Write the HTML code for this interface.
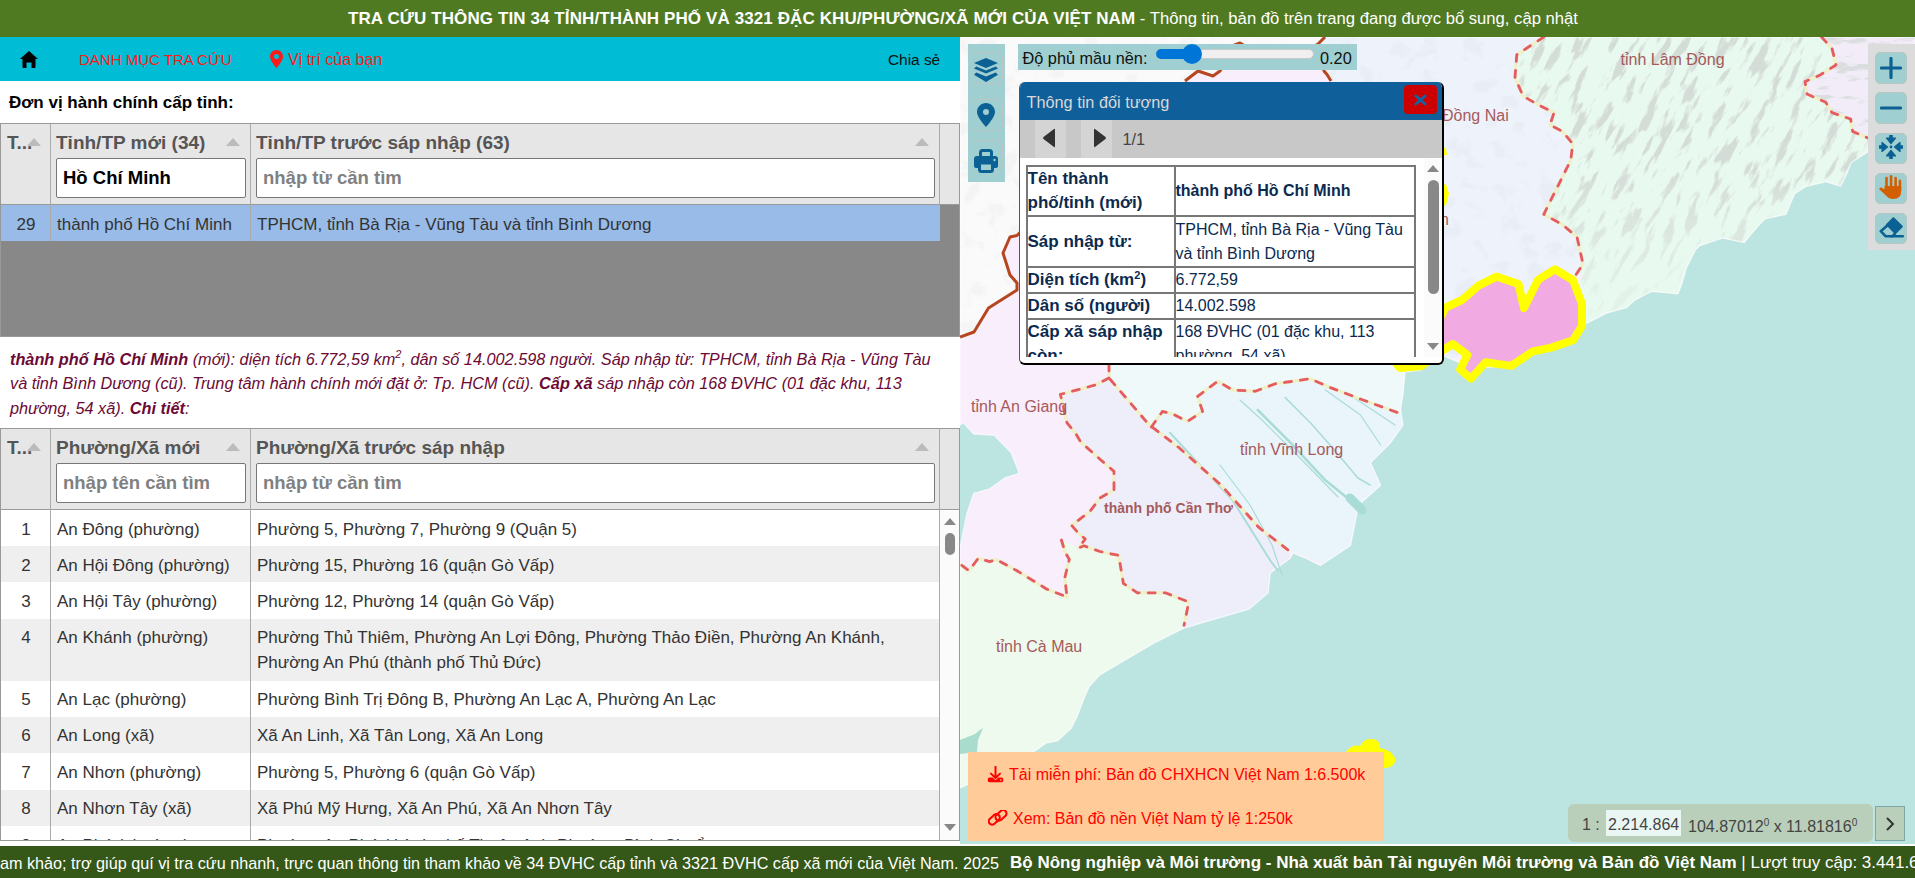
<!DOCTYPE html>
<html><head><meta charset="utf-8">
<style>
*{box-sizing:border-box;margin:0;padding:0}
html,body{width:1915px;height:878px;overflow:hidden;background:#fff;font-family:"Liberation Sans",sans-serif;color:#333}
.abs{position:absolute}
.nw{white-space:nowrap}
#top{left:0;top:0;width:1915px;height:37px;background:#4f7a21;color:#fff;font-size:17px;line-height:37px}
#nav{left:0;top:37px;width:960px;height:44px;background:#00bcd4}
#foot{left:0;top:846px;width:1915px;height:32px;background:#355717;color:#fff;font-size:16.2px;line-height:34px}
.grid{left:0;width:960px;border:1px solid #999;background:#fff;overflow:hidden}
.hdr{left:0;top:0;width:958px;height:81px;background:#e6e6e6;border-bottom:1px solid #999}
.vl{width:1px;background:#aaa}
.htxt{font-size:19px;font-weight:bold;color:#555;top:8px}
.sort{width:0;height:0;border-left:7px solid transparent;border-right:7px solid transparent;border-bottom:8px solid #bbb}
.inp{height:40px;background:#fff;border:1px solid #777;border-radius:2px;font-size:18.5px;font-weight:bold;line-height:38px;padding-left:6px;color:#808080}
.row{left:0;width:939px;font-size:17px;color:#333;line-height:26px}
.c1{left:0;width:50px;text-align:center}
.c2{left:56px}
.c3{left:256px}
.desc{left:10px;top:347px;font-size:16.3px;font-style:italic;color:#6b0a35;line-height:24.3px}
.desc b{font-weight:bold}
.tb{width:32px;height:32px;background:#9fcfd0;border:1px solid #b9c6c6;border-radius:5px}
.pt{border-collapse:collapse;font-size:16px;color:#0b2a4e;line-height:24px}
.pt th,.pt td{border:2px solid #777;text-align:left;vertical-align:middle;padding:0;white-space:nowrap}
.pt th{width:148px;font-weight:bold;font-size:17px}
.pt td{width:240px}
</style></head><body>
<div id="top" class="abs nw"><span class="abs" style="left:348px"><b style="letter-spacing:0.1px">TRA CỨU THÔNG TIN 34 TỈNH/THÀNH PHỐ VÀ 3321 ĐẶC KHU/PHƯỜNG/XÃ MỚI CỦA VIỆT NAM</b><span style="font-size:16.65px"> - Thông tin, bản đồ trên trang đang được bổ sung, cập nhật</span></span></div>

<div id="nav" class="abs">
  <svg class="abs" style="left:20px;top:14px" width="18" height="17" viewBox="0 0 18 17"><path d="M9 0 L18 8 L15.5 8 L15.5 16 Q15.5 17 14.5 17 L11.5 17 L11.5 11.5 L6.5 11.5 L6.5 17 L3.5 17 Q2.5 17 2.5 16 L2.5 8 L0 8 Z" fill="#000"/></svg>
  <span class="abs nw" style="left:79px;top:14px;font-size:15px;color:#ff1a1a">DANH MỤC TRA CỨU</span>
  <svg class="abs" style="left:270px;top:13px" width="13" height="18" viewBox="0 0 13 18"><path d="M6.5 0C2.9 0 0 2.9 0 6.5 0 11 6.5 18 6.5 18S13 11 13 6.5C13 2.9 10.1 0 6.5 0Zm0 9A2.5 2.5 0 1 1 6.5 4 2.5 2.5 0 0 1 6.5 9Z" fill="#ff1a1a"/></svg>
  <span class="abs nw" style="left:288px;top:14px;font-size:16px;color:#ff1a1a">Vị trí của bạn</span>
  <span class="abs nw" style="left:888px;top:14px;font-size:15.4px;color:#111">Chia sẻ</span>
</div>

<div class="abs nw" style="left:9px;top:93px;font-size:17px;font-weight:bold;color:#000">Đơn vị hành chính cấp tỉnh:</div>

<!-- grid 1 -->
<div class="abs grid" style="top:123px;height:214px">
  <div class="abs hdr"></div>
  <div class="abs" style="left:0;top:81px;width:958px;height:132px;background:#888"></div>
  <div class="abs" style="left:0;top:81px;width:939px;height:36px;background:#99bbe8"></div>
  <div class="abs vl" style="left:49px;top:0;height:117px"></div>
  <div class="abs vl" style="left:249px;top:0;height:117px"></div>
  <div class="abs vl" style="left:938px;top:0;height:81px"></div>
  <span class="abs htxt nw" style="left:6px">T...</span>
  <div class="abs sort" style="left:26px;top:14px"></div>
  <span class="abs htxt nw" style="left:55px">Tỉnh/TP mới (34)</span>
  <div class="abs sort" style="left:225px;top:14px"></div>
  <span class="abs htxt nw" style="left:255px">Tỉnh/TP trước sáp nhập (63)</span>
  <div class="abs sort" style="left:914px;top:14px"></div>
  <div class="abs inp nw" style="left:55px;top:34px;width:190px;color:#000">Hồ Chí Minh</div>
  <div class="abs inp nw" style="left:255px;top:34px;width:679px">nhập từ cần tìm</div>
  <div class="abs row nw" style="top:87.5px"><span class="abs c1">29</span><span class="abs c2">thành phố Hồ Chí Minh</span><span class="abs c3">TPHCM, tỉnh Bà Rịa - Vũng Tàu và tỉnh Bình Dương</span></div>
</div>

<div class="abs desc nw"><b>thành phố Hồ Chí Minh</b> (mới): diện tích 6.772,59 km<sup style="font-size:11px;vertical-align:7px;line-height:0">2</sup>, dân số 14.002.598 người. Sáp nhập từ: TPHCM, tỉnh Bà Rịa - Vũng Tàu<br>và tỉnh Bình Dương (cũ). Trung tâm hành chính mới đặt ở: Tp. HCM (cũ). <b>Cấp xã</b> sáp nhập còn 168 ĐVHC (01 đặc khu, 113<br>phường, 54 xã). <b>Chi tiết</b>:</div>

<!-- grid 2 -->
<div class="abs grid" style="top:428px;height:413px">
  <div class="abs hdr"></div>
  <div class="abs" style="left:0;top:117px;width:939px;height:36px;background:#efefef"></div>
  <div class="abs" style="left:0;top:190px;width:939px;height:62px;background:#efefef"></div>
  <div class="abs" style="left:0;top:288px;width:939px;height:36px;background:#efefef"></div>
  <div class="abs" style="left:0;top:361px;width:939px;height:36px;background:#efefef"></div>
  <div class="abs vl" style="left:49px;top:0;height:413px"></div>
  <div class="abs vl" style="left:249px;top:0;height:413px"></div>
  <div class="abs vl" style="left:938px;top:0;height:413px"></div>
  <div class="abs" style="left:939px;top:82px;width:19px;height:330px;background:#fbfbfb"></div>
  <div class="abs" style="left:943px;top:89px;width:0;height:0;border-left:6.5px solid transparent;border-right:6.5px solid transparent;border-bottom:7px solid #888"></div>
  <div class="abs" style="left:944px;top:104px;width:10px;height:22px;border-radius:5px;background:#888"></div>
  <div class="abs" style="left:943px;top:395px;width:0;height:0;border-left:6.5px solid transparent;border-right:6.5px solid transparent;border-top:7px solid #888"></div>
  <span class="abs htxt nw" style="left:6px">T...</span>
  <div class="abs sort" style="left:26px;top:14px"></div>
  <span class="abs htxt nw" style="left:55px">Phường/Xã mới</span>
  <div class="abs sort" style="left:225px;top:14px"></div>
  <span class="abs htxt nw" style="left:255px">Phường/Xã trước sáp nhập</span>
  <div class="abs sort" style="left:914px;top:14px"></div>
  <div class="abs inp nw" style="left:55px;top:34px;width:190px">nhập tên cần tìm</div>
  <div class="abs inp nw" style="left:255px;top:34px;width:679px">nhập từ cần tìm</div>
  <div class="abs row nw" style="top:87.5px"><span class="abs c1">1</span><span class="abs c2">An Đông (phường)</span><span class="abs c3">Phường 5, Phường 7, Phường 9 (Quận 5)</span></div>
  <div class="abs row nw" style="top:123.5px"><span class="abs c1">2</span><span class="abs c2">An Hội Đông (phường)</span><span class="abs c3">Phường 15, Phường 16 (quận Gò Vấp)</span></div>
  <div class="abs row nw" style="top:159.5px"><span class="abs c1">3</span><span class="abs c2">An Hội Tây (phường)</span><span class="abs c3">Phường 12, Phường 14 (quận Gò Vấp)</span></div>
  <div class="abs row nw" style="top:195.5px"><span class="abs c1">4</span><span class="abs c2">An Khánh (phường)</span><span class="abs c3">Phường Thủ Thiêm, Phường An Lợi Đông, Phường Thảo Điền, Phường An Khánh,<br><span style="position:relative;top:-1px">Phường An Phú (thành phố Thủ Đức)</span></span></div>
  <div class="abs row nw" style="top:257.5px"><span class="abs c1">5</span><span class="abs c2">An Lạc (phường)</span><span class="abs c3">Phường Bình Trị Đông B, Phường An Lạc A, Phường An Lạc</span></div>
  <div class="abs row nw" style="top:293.5px"><span class="abs c1">6</span><span class="abs c2">An Long (xã)</span><span class="abs c3">Xã An Linh, Xã Tân Long, Xã An Long</span></div>
  <div class="abs row nw" style="top:330.5px"><span class="abs c1">7</span><span class="abs c2">An Nhơn (phường)</span><span class="abs c3">Phường 5, Phường 6 (quận Gò Vấp)</span></div>
  <div class="abs row nw" style="top:366.5px"><span class="abs c1">8</span><span class="abs c2">An Nhơn Tây (xã)</span><span class="abs c3">Xã Phú Mỹ Hưng, Xã An Phú, Xã An Nhơn Tây</span></div>
  <div class="abs row nw" style="top:403.5px"><span class="abs c1">9</span><span class="abs c2">An Phú (phường)</span><span class="abs c3">Phường An Phú (thành phố Thuận An), Phường Bình Chuẩn</span></div>
</div>

<!-- MAP -->
<div id="map" class="abs" style="left:960px;top:37px;width:955px;height:807px;overflow:hidden;background:#bce4e0">
<svg class="abs" style="left:0;top:0" width="955" height="808" viewBox="960 37 955 808">
<defs>
<clipPath id="land"><path d="M960 37 L1915 37 L1915 110 L1867.3 152.2 L1851 162.6 L1846.5 174.4 L1840.6 186.2 L1825.8 181.8 L1806.6 186.2 L1794.7 193.6 L1785.8 214.4 L1765.1 218.8 L1759.2 224.7 L1750.3 235 L1744.4 242.5 L1722.2 238 L1700 245.5 L1695.3 250 L1686.5 267.6 L1681.5 285 L1677.8 294 L1667.7 292.7 L1651.5 291.4 L1635 300 L1626.4 307.7 L1607.6 312.7 L1585 324 L1579 335 L1562 341 L1529 351 L1504 366 L1479 368 L1469 380 L1463 364 L1442 355 L1421 370 L1405 372 L1403 394 L1400.6 410 L1403 425 L1390.6 442.7 L1370.5 462.8 L1380.6 485.3 L1358 505.4 L1355.5 520.4 L1350.5 545.5 L1320.4 565.5 L1305.4 558 L1292.9 553 L1290.4 558 L1270.3 573 L1268 593 L1249 609 L1184 628 L1156 642 L1100 674.8 L1089.4 686.2 L1084.8 696.4 L1076.9 717 L1071.2 728.3 L1057.5 740.9 L1046.1 743.1 L1034.7 751.1 L1028 753 L1000 770 L960 788 L960 548 L962.3 536.7 L966.8 514 L973.7 493.4 L989.6 488.8 L1005.6 477.4 L1014.7 475 L1019.2 473 L1011 452.4 L994 435.3 L973.7 434 L963.4 422.8 L960 425 Z"/></clipPath>
<filter id="terr" x="0" y="0" width="1" height="1">
  <feTurbulence type="fractalNoise" baseFrequency="0.03 0.11" numOctaves="5" seed="7" result="n"/>
  <feColorMatrix in="n" type="matrix" values="0 0 0 0 0.64  0 0 0 0 0.68  0 0 0 0 0.65  9 0 0 0 -4.9"/>
</filter>
<clipPath id="hills"><path d="M1543.8 37 L1821.5 37 L1832 48.4 L1836 65 L1819.5 75.4 L1805 81.6 L1807 94 L1825.7 102.3 L1832 112.7 L1850.6 119 L1852.6 131.4 L1915 140 L1915 400 L1560 400 L1583 264 L1577 237 L1562.4 224.6 L1543.8 214.3 L1552 197.7 L1562.4 177 L1570.7 160.4 L1572.8 143.8 L1562.4 131.4 L1550 125 L1554 112.7 L1537.5 104.4 L1523 96 L1515 77.5 L1516.8 54.7 Z"/></clipPath>
<filter id="terr2" x="0" y="0" width="1" height="1">
  <feTurbulence type="fractalNoise" baseFrequency="0.05 0.05" numOctaves="4" seed="11" result="n"/>
  <feColorMatrix in="n" type="matrix" values="0 0 0 0 0.6  0 0 0 0 0.62  0 0 0 0 0.66  7 0 0 0 -3.9"/>
</filter>
<clipPath id="dn"><path d="M1325 37 L1543.8 37 L1516.8 54.7 L1515 77.5 L1523 96 L1537.5 104.4 L1554 112.7 L1550 125 L1562.4 131.4 L1572.8 143.8 L1570.7 160.4 L1562.4 177 L1552 197.7 L1543.8 214.3 L1562.4 224.6 L1577 237 L1583 264 L1574.9 276.5 L1560 300 L1450 360 L1400 372 L1300 330 L1331 81 L1324 71 L1318 44 Z"/></clipPath>
<clipPath id="kh"><path d="M1821.5 37 L1915 37 L1915 140 L1865 137.6 L1852.6 131.4 L1850.6 119 L1832 112.7 L1825.7 102.3 L1807 94 L1805 81.6 L1819.5 75.4 L1836 65 L1832 48.4 Z"/></clipPath>
<clipPath id="cam"><path d="M960 37 L1325 37 L1318 44 L1300 55 L1260 55 L1240 43 L1232 46 L1220 71 L1213 76 L1198 71 L1185 81 L1017 235 L1010 237 L1003 253 L1010 275 L1017 283 L1017 290 L988.5 308 L974 332 L960 337 Z"/></clipPath>
<linearGradient id="fg" x1="0" y1="0" x2="0" y2="1"><stop offset="0" stop-color="#fff"/><stop offset="0.45" stop-color="#fff"/><stop offset="0.85" stop-color="#444"/><stop offset="1" stop-color="#222"/></linearGradient>
<mask id="fade" maskUnits="userSpaceOnUse" x="1400" y="37" width="515" height="300"><rect x="1400" y="37" width="515" height="300" fill="url(#fg)"/></mask>
</defs>
<rect x="960" y="37" width="955" height="808" fill="#bce4e0"/>
<g clip-path="url(#land)">
  <rect x="960" y="37" width="955" height="808" fill="#f9eefc"/>
  <!-- Cambodia -->
  <path d="M960 37 L1325 37 L1318 44 L1300 55 L1260 55 L1240 43 L1232 46 L1220 71 L1213 76 L1198 71 L1185 81 L1017 235 L1010 237 L1003 253 L1010 275 L1017 283 L1017 290 L988.5 308 L974 332 L960 337 Z" fill="#fafafa"/>
  <!-- Dong Nai / HCM north -->
  <path d="M1325 37 L1543.8 37 L1516.8 54.7 L1515 77.5 L1523 96 L1537.5 104.4 L1554 112.7 L1550 125 L1562.4 131.4 L1572.8 143.8 L1570.7 160.4 L1562.4 177 L1552 197.7 L1543.8 214.3 L1562.4 224.6 L1577 237 L1583 264 L1574.9 276.5 L1560 300 L1450 360 L1400 372 L1300 330 L1331 81 L1324 71 L1318 44 Z" fill="#eef3fb"/>
  <!-- Lam Dong -->
  <path d="M1543.8 37 L1821.5 37 L1832 48.4 L1836 65 L1819.5 75.4 L1805 81.6 L1807 94 L1825.7 102.3 L1832 112.7 L1850.6 119 L1852.6 131.4 L1865 137.6 L1915 140 L1915 400 L1560 400 L1583 264 L1577 237 L1562.4 224.6 L1543.8 214.3 L1552 197.7 L1562.4 177 L1570.7 160.4 L1572.8 143.8 L1562.4 131.4 L1550 125 L1554 112.7 L1537.5 104.4 L1523 96 L1515 77.5 L1516.8 54.7 Z" fill="#e8f9ef"/>
  <path d="M1821.5 37 L1915 37 L1915 140 L1865 137.6 L1852.6 131.4 L1850.6 119 L1832 112.7 L1825.7 102.3 L1807 94 L1805 81.6 L1819.5 75.4 L1836 65 L1832 48.4 Z" fill="#f1ecf8"/>
  <!-- Dong Thap strip -->
  <path d="M1109 364 L1109 378 L1149 424.7 L1151.4 427 L1162.5 411.4 L1172.6 414 L1187.6 421.4 L1202.6 411.4 L1197.6 396.3 L1217.7 381.3 L1232.7 390 L1255.3 391.3 L1275.3 383.8 L1310.4 378.8 L1330.5 387.6 L1363 400 L1398.8 413 L1420 413 L1420 360 Z" fill="#f0f9fa"/>
  <!-- Can Tho -->
  <path d="M1109 378 L1095.4 385 L1060.4 394.4 L1067 422.8 L1076 434 L1080.7 442 L1100 459.2 L1114 471.4 L1114 490 L1100 498 L1089.8 511.6 L1071.6 525.3 L1078.5 533.3 L1085.3 539 L1078.5 548 L1084 545.8 L1089.8 548 L1100 551.5 L1118.7 555.4 L1123.4 583.4 L1137.4 592.8 L1165.4 592.8 L1188.8 602 L1184 625.4 L1184 660 L1300 600 L1289 550.7 L1258.8 527.4 L1221.4 485.4 L1179.4 448 L1149 424.7 Z" fill="#eeeefa"/>
  <!-- Vinh Long -->
  <path d="M1149 424.7 L1151.4 427 L1162.5 411.4 L1172.6 414 L1187.6 421.4 L1202.6 411.4 L1197.6 396.3 L1217.7 381.3 L1232.7 390 L1255.3 391.3 L1275.3 383.8 L1310.4 378.8 L1330.5 387.6 L1363 400 L1398.8 413 L1420 413 L1420 600 L1289 550.7 L1258.8 527.4 L1221.4 485.4 L1179.4 448 Z" fill="#eaf4fb"/>
  <!-- Ca Mau -->
  <path d="M960 564 L969 570.8 L978.2 558.3 L989.6 561.7 L996.4 559.5 L1017 570.8 L1046.6 589 L1067 597 L1064.8 577.7 L1069.3 559.5 L1064.8 551.5 L1061.4 540 L1078.5 548 L1084 545.8 L1089.8 548 L1100 551.5 L1118.7 555.4 L1123.4 583.4 L1137.4 592.8 L1165.4 592.8 L1188.8 602 L1184 625.4 L1184 700 L960 845 Z" fill="#eefaee"/>
  <g clip-path="url(#hills)" mask="url(#fade)"><g transform="rotate(-62 1700 200)"><rect x="1400" y="-100" width="600" height="600" filter="url(#terr)" opacity="0.85"/></g></g>
  <g clip-path="url(#dn)"><rect x="1330" y="37" width="260" height="340" filter="url(#terr2)" opacity="0.14"/></g>
  <g clip-path="url(#kh)"><rect x="1815" y="37" width="100" height="110" filter="url(#terr)" opacity="0.7"/></g>
  <g clip-path="url(#cam)"><rect x="960" y="37" width="380" height="300" filter="url(#terr2)" opacity="0.12"/></g>
</g>
<path d="M960 37 L1915 37 L1915 110 L1867.3 152.2 L1851 162.6 L1846.5 174.4 L1840.6 186.2 L1825.8 181.8 L1806.6 186.2 L1794.7 193.6 L1785.8 214.4 L1765.1 218.8 L1759.2 224.7 L1750.3 235 L1744.4 242.5 L1722.2 238 L1700 245.5 L1695.3 250 L1686.5 267.6 L1681.5 285 L1677.8 294 L1667.7 292.7 L1651.5 291.4 L1635 300 L1626.4 307.7 L1607.6 312.7 L1585 324 L1579 335 L1562 341 L1529 351 L1504 366 L1479 368 L1469 380 L1463 364 L1442 355 L1421 370 L1405 372 L1403 394 L1400.6 410 L1403 425 L1390.6 442.7 L1370.5 462.8 L1380.6 485.3 L1358 505.4 L1355.5 520.4 L1350.5 545.5 L1320.4 565.5 L1305.4 558 L1292.9 553 L1290.4 558 L1270.3 573 L1268 593 L1249 609 L1184 628 L1156 642 L1100 674.8 L1089.4 686.2 L1084.8 696.4 L1076.9 717 L1071.2 728.3 L1057.5 740.9 L1046.1 743.1 L1034.7 751.1 L1028 753 L1000 770 L960 788 L960 548 L962.3 536.7 L966.8 514 L973.7 493.4 L989.6 488.8 L1005.6 477.4 L1014.7 475 L1019.2 473 L1011 452.4 L994 435.3 L973.7 434 L963.4 422.8 L960 425 Z" fill="none" stroke="#ffffff" stroke-width="1.4" opacity="0.6"/>
<g fill="none" stroke="#a9dcd6" stroke-linecap="round" stroke-linejoin="round">
  <path d="M1257.8 410 L1290.4 442.7 L1325.4 480.3 L1350.5 500.4 L1363 508" stroke-width="2.5"/>
  <path d="M1350 498 L1362 510" stroke-width="9"/>
  <path d="M1240 400 L1262 420 L1300 458 L1338 497" stroke-width="1.2"/>
  <path d="M1285.3 397.6 L1310.4 422.7 L1330 445 L1358 478 L1370 485" stroke-width="1.5"/>
  <path d="M1325.4 390 L1360.5 415 L1380.6 445" stroke-width="1.2"/>
  <path d="M1350 395 L1395 425" stroke-width="1.2"/>
  <path d="M1170 432.7 L1232.7 500.4 L1270.3 560.5 L1277.8 570.5" stroke-width="2"/>
  <path d="M1220 465 L1250 505 L1272 545 L1282 575" stroke-width="1.2"/>
</g>
<path d="M960 740 L975 734 L980 730 L983 728 L978 740 L977 752 L960 754 Z" fill="#a9dccd"/>
<!-- Brown national border -->
<path d="M960 337 L974 332 L988.5 308 L1017 290 L1017 283 L1010 275 L1003 253 L1010 237 L1017 235.5 L1030 222" fill="none" stroke="#b5461f" stroke-width="3" stroke-linejoin="round"/>
<path d="M1185 81 L1198 71 L1213 76 L1220 71 L1232 46 L1240 43 L1260 55 L1300 55 L1318 44 L1325 37" fill="none" stroke="#b5461f" stroke-width="3" stroke-linejoin="round"/>
<path d="M1318 44 L1324 71 L1327 74.5 L1331 81" fill="none" stroke="#b5461f" stroke-width="3" stroke-linejoin="round"/>
<!-- dashed boundaries -->
<g fill="none" stroke-linejoin="round">
<g stroke="#f0f0c8" stroke-width="3.4">
  <path id="b1" d="M1543.8 37 L1516.8 54.7 L1515 77.5 L1523 96 L1537.5 104.4 L1554 112.7 L1550 125 L1562.4 131.4 L1572.8 143.8 L1570.7 160.4 L1562.4 177 L1552 197.7 L1543.8 214.3 L1562.4 224.6 L1577 237 L1583 264 L1574.9 276.5"/>
  <path id="b2" d="M1821.5 37 L1832 48.4 L1836 65 L1819.5 75.4 L1805 81.6 L1807 94 L1825.7 102.3 L1832 112.7 L1850.6 119 L1852.6 131.4 L1868 138"/>
  <path id="b3" d="M1109 364 L1109 378 L1149 424.7 L1179.4 448 L1221.4 485.4 L1258.8 527.4 L1289 550.7"/>
  <path id="b4" d="M1109 378 L1095.4 385 L1060.4 394.4 L1067 422.8 L1076 434 L1080.7 442 L1100 459.2 L1114 471.4 L1114 490 L1100 498 L1089.8 511.6 L1071.6 525.3 L1078.5 533.3 L1085.3 539 L1078.5 548 L1084 545.8 L1089.8 548 L1100 551.5 L1118.7 555.4 L1123.4 583.4 L1137.4 592.8 L1165.4 592.8 L1188.8 602 L1184 625.4"/>
  <path id="b5" d="M1061.4 540 L1064.8 551.5 L1069.3 559.5 L1064.8 577.7 L1067 597 L1046.6 589 L1017 570.8 L996.4 559.5 L989.6 561.7 L978.2 558.3 L969 570.8 L960 564"/>
  <path id="b6" d="M1151.4 427 L1162.5 411.4 L1172.6 414 L1187.6 421.4 L1202.6 411.4 L1197.6 396.3 L1217.7 381.3 L1232.7 390 L1255.3 391.3 L1275.3 383.8 L1310.4 378.8 L1330.5 387.6 L1363 400 L1398.8 413"/>
</g>
<g stroke="#e45c62" stroke-width="2.8" stroke-dasharray="7 9" stroke-linecap="round">
  <use href="#b1"/><use href="#b2"/><use href="#b3"/><use href="#b4"/><use href="#b5"/><use href="#b6"/>
</g>
</g>
<!-- HCM highlight -->
<path d="M1300 250 L1440 318 L1445.6 307.5 L1462 300 L1478.4 285.7 L1496.6 276.6 L1518.5 284 L1524 308 L1538 280 L1540.3 278.4 L1554.9 269.3 L1573 280.2 L1582 303.9 L1582 325.8 L1573 340.3 L1551.3 347.6 L1533 351.3 L1511.2 365.9 L1485.7 362.2 L1471 378.6 L1460.2 369.5 L1467.5 354.9 L1452.9 344 L1440 352 L1421.5 366 L1400 368 Z" fill="#f2aae3" stroke="#ffff00" stroke-width="8" stroke-linejoin="round"/>
<path d="M1438 186 L1446 184 L1449 194 L1446 205 L1438 206 Z M1438 147 L1446 148 L1447 155 L1438 156 Z" fill="#ffff00"/>
<text x="1440" y="225" font-family="Liberation Sans" font-size="16" fill="#a55a5a">n</text>
<!-- Con Dao islands -->
<path d="M1346 752 Q1352 744 1360 746 Q1364 738 1372 739 Q1381 740 1380 748 Q1390 750 1394 756 Q1398 763 1390 767 Q1382 770 1376 764 L1360 762 Q1348 760 1346 752 Z" fill="#ffff00"/>
<!-- labels -->
<g font-family="Liberation Sans" font-size="16" fill="#a55a5a">
  <text x="1620.5" y="65">tỉnh Lâm Đồng</text>
  <text x="1442" y="121">Đồng Nai</text>
  <text x="971" y="412">tỉnh An Giang</text>
  <text x="1240" y="455">tỉnh Vĩnh Long</text>
  <text x="996" y="652">tỉnh Cà Mau</text>
  <text x="1104" y="513" font-size="14" font-weight="bold">thành phố Cần Thơ</text>
</g>
</svg>
  <!-- left toolbar -->
  <div class="abs" style="left:8px;top:7px;width:37px;height:138px;background:#9fcfd0"></div>
  <div class="abs tb" style="left:11px;top:15px"></div>
  <div class="abs tb" style="left:11px;top:62px"></div>
  <div class="abs tb" style="left:11px;top:102.5px"></div>
  <svg class="abs" style="left:14px;top:21px" width="24" height="24" viewBox="0 0 24 24"><path d="M12 0 L24 5 L12 10 L0 5 Z" fill="#0c6194"/><path d="M2.3 8.6 L12 12.6 L21.7 8.6 L24 10.5 L12 15.5 L0 10.5 Z" fill="#0c6194"/><path d="M2.3 14.6 L12 18.6 L21.7 14.6 L24 16.8 L12 24 L0 16.8 Z" fill="#0c6194"/></svg>
  <svg class="abs" style="left:17px;top:66px" width="18" height="24" viewBox="0 0 18 24"><path d="M9 0C4 0 0 4 0 9 0 14.5 9 24 9 24S18 14.5 18 9C18 4 14 0 9 0Zm0 12A3 3 0 1 1 9 6 3 3 0 0 1 9 12Z" fill="#0c6194"/></svg>
  <svg class="abs" style="left:14px;top:112px" width="24" height="24" viewBox="0 0 24 24"><path d="M6.5 8 V3.5 Q6.5 1.5 8.5 1.5 H15.5 Q17.5 1.5 17.5 3.5 V8" fill="none" stroke="#0c6194" stroke-width="3"/><path d="M3 7 H21 Q24 7 24 10 V17 Q24 19 22 19 H2 Q0 19 0 17 V10 Q0 7 3 7Z" fill="#0c6194"/><circle cx="20.5" cy="11" r="1.2" fill="#9fcfd0"/><path d="M5.5 14 H18.5 V20.5 Q18.5 22.5 16.5 22.5 H7.5 Q5.5 22.5 5.5 20.5Z" fill="#9fcfd0" stroke="#0c6194" stroke-width="3"/></svg>
  <!-- slider -->
  <div class="abs" style="left:58px;top:7px;width:339px;height:26px;background:#9fcfd0"></div>
  <span class="abs nw" style="left:62.5px;top:10px;font-size:16.3px;color:#111;line-height:22px">Độ phủ mầu nền:</span>
  <div class="abs" style="left:195.5px;top:12px;width:158px;height:10px;border-radius:5px;background:#efefef;border:1px solid #c9c9c9"></div>
  <div class="abs" style="left:195.5px;top:12px;width:40px;height:10px;border-radius:5px;background:#0075d8"></div>
  <div class="abs" style="left:222px;top:7px;width:20px;height:20px;border-radius:50%;background:#0075d8"></div>
  <span class="abs nw" style="left:360px;top:10px;font-size:16.3px;color:#111;line-height:22px">0.20</span>
  <!-- popup -->
  <div class="abs" style="left:58.5px;top:45px;width:425px;height:283px;background:#fff;border-left:1px solid #555;border-right:2px solid #000;border-bottom:2px solid #000;border-radius:6px;overflow:hidden">
    <div class="abs" style="left:0;top:0;width:424px;height:37.5px;background:#0f5f9b"></div>
    <span class="abs nw" style="left:7px;top:9px;font-size:16.3px;color:#d8d8d8;line-height:22px">Thông tin đối tượng</span>
    <div class="abs" style="left:384.7px;top:3px;width:33px;height:29px;background:#cc0000;border-radius:4px"></div>
    <svg class="abs" style="left:394.7px;top:12px" width="13" height="12" viewBox="0 0 13 12"><path d="M2 2 L11 10 M11 2 L2 10" stroke="#1264a3" stroke-width="3" stroke-linecap="round"/></svg>
    <div class="abs" style="left:0;top:37.5px;width:424px;height:38.5px;background:#c8c8c8"></div>
    <div class="abs" style="left:15px;top:37.5px;width:31px;height:38.5px;background:#d4d4d4"></div>
    <div class="abs" style="left:61px;top:37.5px;width:31px;height:38.5px;background:#d4d4d4"></div>
    <svg class="abs" style="left:22px;top:45px" width="14" height="22" viewBox="0 0 14 22"><path d="M12 2 Q13 1 13 3 V19 Q13 21 12 20 L1.5 12 Q0.5 11 1.5 10 Z" fill="#333"/></svg>
    <svg class="abs" style="left:73px;top:45px" width="14" height="22" viewBox="0 0 14 22"><path d="M2 2 Q1 1 1 3 V19 Q1 21 2 20 L12.5 12 Q13.5 11 12.5 10 Z" fill="#333"/></svg>
    <span class="abs nw" style="left:103px;top:46px;font-size:16.3px;color:#444;line-height:22px">1/1</span>
    <div class="abs" style="left:0;top:76px;width:424px;height:199px;overflow:hidden">
      <table class="abs pt" style="left:6px;top:7px">
        <tr style="height:50px"><th>Tên thành<br>phố/tỉnh (mới)</th><td><b>thành phố Hồ Chí Minh</b></td></tr>
        <tr style="height:51px"><th>Sáp nhập từ:</th><td>TPHCM, tỉnh Bà Rịa - Vũng Tàu<br>và tỉnh Bình Dương</td></tr>
        <tr style="height:26px"><th>Diện tích (km<sup style="font-size:11px;vertical-align:6px;line-height:0">2</sup>)</th><td>6.772,59</td></tr>
        <tr style="height:26px"><th>Dân số (người)</th><td>14.002.598</td></tr>
        <tr style="height:50px"><th>Cấp xã sáp nhập<br>còn:</th><td>168 ĐVHC (01 đặc khu, 113<br>phường, 54 xã)</td></tr>
      </table>
      <div class="abs" style="left:404px;top:0;width:20px;height:199px;background:#fbfbfb"></div>
      <div class="abs" style="left:407.5px;top:7px;width:0;height:0;border-left:6.5px solid transparent;border-right:6.5px solid transparent;border-bottom:7px solid #888"></div>
      <div class="abs" style="left:408.5px;top:22px;width:11px;height:114px;border-radius:5.5px;background:#888"></div>
      <div class="abs" style="left:407.5px;top:185px;width:0;height:0;border-left:6.5px solid transparent;border-right:6.5px solid transparent;border-top:7px solid #888"></div>
    </div>
  </div>
  <!-- right controls -->
  <div class="abs" style="left:908px;top:7px;width:47px;height:206px;background:#dcdcdc"></div>
  <div class="abs tb" style="left:915px;top:15.3px;height:31.3px"></div>
  <div class="abs tb" style="left:915px;top:55.4px;height:31.3px"></div>
  <div class="abs tb" style="left:915px;top:95.5px;height:31.3px"></div>
  <div class="abs tb" style="left:915px;top:135.6px;height:31.3px"></div>
  <div class="abs tb" style="left:915px;top:175.7px;height:31.3px"></div>
  <svg class="abs" style="left:920px;top:20px" width="22" height="22" viewBox="0 0 22 22"><path d="M11 1.5 V20.5 M1.5 11 H20.5" stroke="#0c6194" stroke-width="3.2" stroke-linecap="round"/></svg>
  <svg class="abs" style="left:920px;top:60px" width="22" height="22" viewBox="0 0 22 22"><path d="M1.5 11 H20.5" stroke="#0c6194" stroke-width="3.2" stroke-linecap="round"/></svg>
  <svg class="abs" style="left:919px;top:98px" width="24" height="24" viewBox="0 0 24 24"><g fill="#0c6194" stroke="#0c6194" stroke-width="1.2" stroke-linejoin="round"><path d="M10.8 0.5 H13.2 V3 H16.5 L12 8.5 L7.5 3 H10.8Z"/><path d="M10.8 23.5 H13.2 V21 H16.5 L12 15.5 L7.5 21 H10.8Z"/><path d="M0.5 10.8 V13.2 H3 V16.5 L8.5 12 L3 7.5 V10.8Z"/><path d="M23.5 10.8 V13.2 H21 V16.5 L15.5 12 L21 7.5 V10.8Z"/></g><circle cx="12" cy="12" r="1.4" fill="#0c6194"/></svg>
  <svg class="abs" style="left:919px;top:138px" width="24" height="25" viewBox="0 0 24 25"><g fill="#d35f00"><rect x="6.2" y="1.8" width="2.6" height="14" rx="1.3"/><rect x="10.8" y="0" width="2.6" height="14" rx="1.3"/><rect x="15.3" y="1.8" width="2.6" height="14" rx="1.3"/><rect x="19.6" y="4.6" width="2.6" height="12" rx="1.3"/><path d="M5.5 11 H22.2 V16 Q22.2 24 14 24 Q10 24 7.5 21 L0.8 14.8 Q-0.2 13.6 1 12.8 Q2.2 12 3.4 12.9 L5.5 14.5Z"/></g></svg>
  <svg class="abs" style="left:919px;top:179.7px" width="25" height="22" viewBox="0 0 25 22"><g fill="#0c6194" stroke="#0c6194" stroke-linejoin="round"><path d="M14.4 1.2 L22.8 9.5 L16.3 16 L8 7.6 Z" stroke-width="2"/></g><path d="M8.6 8.2 L1.8 14.2 L6.5 19.2 L13.5 19.2 L16.5 16.2" fill="none" stroke="#0c6194" stroke-width="2.6" stroke-linejoin="round"/><path d="M12.5 19.3 H23.8" stroke="#0c6194" stroke-width="2.5" stroke-linecap="round"/></svg>
  <!-- download box -->
  <div class="abs" style="left:8px;top:715px;width:416px;height:88.5px;background:#ffcc99"></div>
  <svg class="abs" style="left:27px;top:728.5px" width="17" height="17" viewBox="0 0 17 17"><path d="M8.5 0.8 V11.5 M4 7.6 L8.5 12 L13 7.6" fill="none" stroke="#f00" stroke-width="2" stroke-linecap="round" stroke-linejoin="round"/><path d="M2.4 11.6 H5.6 L8.5 14.3 L11.4 11.6 H14.6 Q16.3 11.6 16.3 13.9 Q16.3 16.2 14.6 16.2 H2.4 Q0.7 16.2 0.7 13.9 Q0.7 11.6 2.4 11.6Z" fill="#f00"/><circle cx="13.8" cy="14" r="0.8" fill="#ffcc99"/></svg>
  <span class="abs nw" style="left:49px;top:727px;font-size:16px;color:#f00;line-height:22px">Tải miễn phí: Bản đồ CHXHCN Việt Nam 1:6.500k</span>
  <svg class="abs" style="left:27.5px;top:773px" width="20" height="16" viewBox="0 0 20 16"><g fill="none" stroke="#f00" stroke-width="2.1"><rect x="-6.2" y="-3.4" width="12.4" height="6.8" rx="3.4" transform="translate(6.3 9.4) rotate(-42)"/><rect x="-6.2" y="-3.4" width="12.4" height="6.8" rx="3.4" transform="translate(13 5.4) rotate(-42)"/></g></svg>
  <span class="abs nw" style="left:53px;top:771px;font-size:16px;color:#f00;line-height:22px">Xem: Bản đồ nền Việt Nam tỷ lệ 1:250k</span>
  <!-- scale box -->
  <div class="abs" style="left:608px;top:767px;width:305px;height:38px;background:#b9cfb9;border-radius:6px"></div>
  <span class="abs nw" style="left:622px;top:776.5px;font-size:16px;color:#444;line-height:22px">1 :</span>
  <div class="abs" style="left:646px;top:773px;width:75px;height:26px;background:#eaf6f3"></div>
  <span class="abs nw" style="left:648px;top:776.5px;font-size:16px;color:#444;line-height:22px">2.214.864</span>
  <span class="abs nw" style="left:728px;top:778.5px;font-size:16px;color:#444;line-height:22px">104.87012<sup style="font-size:10px;vertical-align:6px;line-height:0">0</sup> x 11.81816<sup style="font-size:10px;vertical-align:6px;line-height:0">0</sup></span>
  <div class="abs" style="left:915px;top:769px;width:30px;height:35px;background:#b9cfb9;border:1px solid #7ea6a6"></div>
  <svg class="abs" style="left:924px;top:779px" width="12" height="16" viewBox="0 0 12 16"><path d="M3 2 L9 8 L3 14" fill="none" stroke="#333" stroke-width="2"/></svg>

</div>

<div id="foot" class="abs nw"><span class="abs" style="left:0">am khảo; trợ giúp quí vị tra cứu nhanh, trực quan thông tin tham khảo về 34 ĐVHC cấp tỉnh và 3321 ĐVHC cấp xã mới của Việt Nam. 2025</span><span class="abs" style="left:1010px;font-size:17px"><b>Bộ Nông nghiệp và Môi trường - Nhà xuất bản Tài nguyên Môi trường và Bản đồ Việt Nam</b> | Lượt truy cập: 3.441.602</span></div>
</body></html>
